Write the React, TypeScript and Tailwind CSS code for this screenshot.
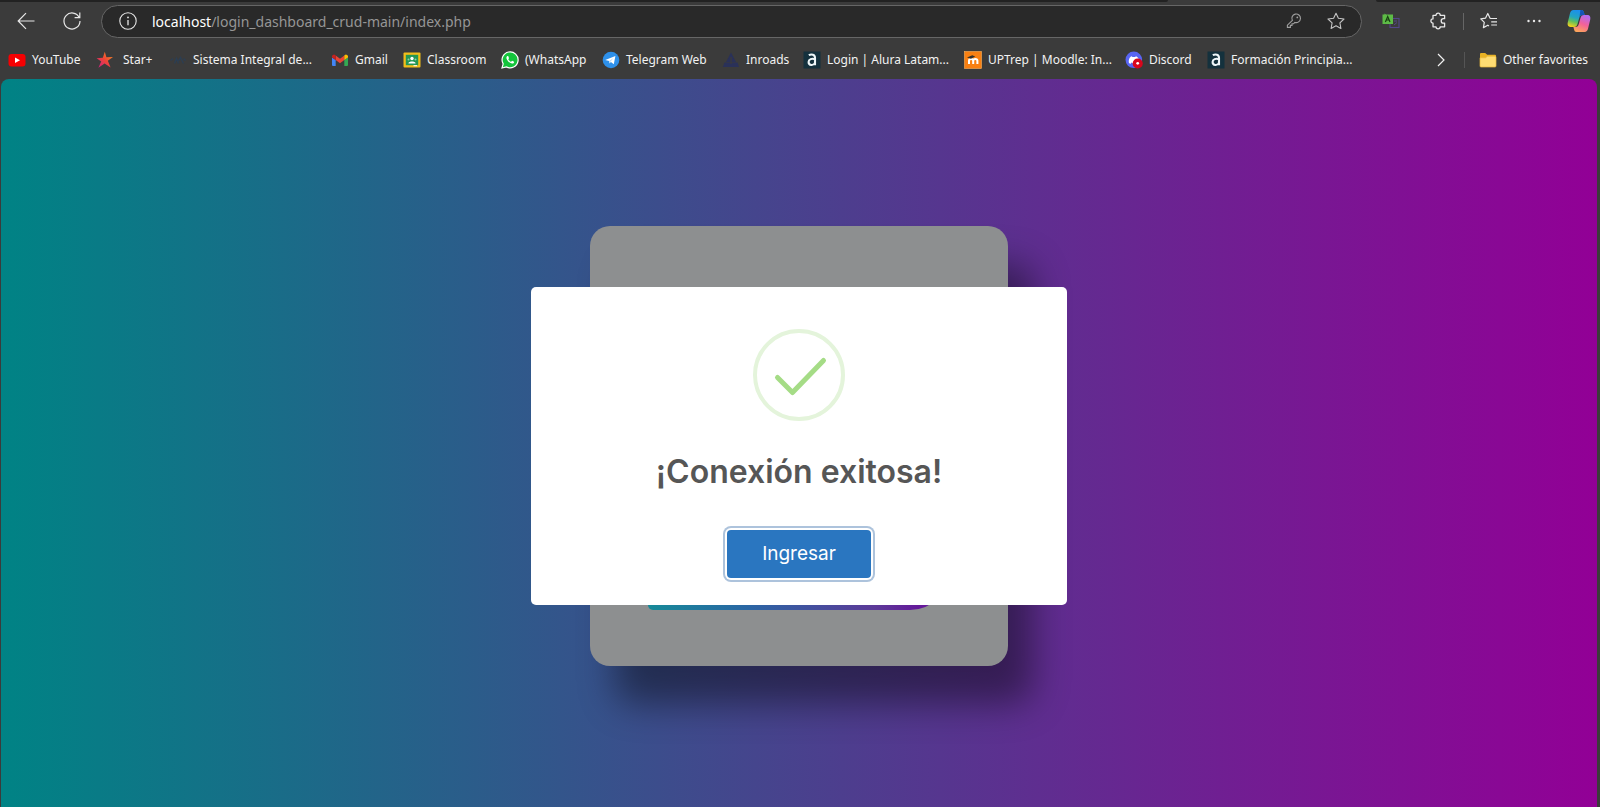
import React from "react";

function YouTubeIcon() {
  return (
    <svg viewBox="0 0 18 18" className="size-[18px] shrink-0">
      <rect x="0.5" y="3" width="17" height="12.5" rx="3" fill="#f60002" />
      <path d="M7 6.4 12 9.2 7 12Z" fill="#fff" />
    </svg>
  );
}

function StarPlusIcon() {
  return (
    <svg viewBox="0 0 18 18" className="mr-[3px] size-[18px] shrink-0">
      <defs>
        <linearGradient id="starplus" x1="0" y1="1" x2="1" y2="0">
          <stop offset="0" stopColor="#c81b8c" />
          <stop offset="0.5" stopColor="#ee4438" />
          <stop offset="1" stopColor="#fb9a1c" />
        </linearGradient>
      </defs>
      <path d="M8.8 0.8 10.4 6.2 17 6 11.8 9.8 14.6 16.6 8.6 12.4 2.4 16.8 5.2 10.6 0.6 7.2 6.8 6.8Z" fill="url(#starplus)" />
    </svg>
  );
}

function SistemaIcon() {
  return (
    <svg viewBox="0 0 18 18" className="size-[18px] shrink-0" fill="none" stroke="#2c3e52" strokeWidth="1.4">
      <path d="M1.5 9.5 4 7.5M5.5 12.5 7.5 7.5 9.5 12.5M9.5 10 11.5 6.5 14.5 12.5M14.5 7.5 16.5 9.5" />
    </svg>
  );
}

function GmailIcon() {
  return (
    <svg viewBox="0 0 18 18" className="size-[18px] shrink-0">
      <path d="M1 6.5 4.7 9V15H2A1 1 0 0 1 1 14Z" fill="#4285f4" />
      <path d="M17 6.5 13.3 9V15H16A1 1 0 0 0 17 14Z" fill="#34a853" />
      <path d="M4.7 4.6 9 7.8 13.3 4.6V9L9 12.2 4.7 9Z" fill="#ea4335" />
      <path d="M1 5A2 2 0 0 1 4.4 4.3L4.7 4.6V9L1 6.5Z" fill="#c5221f" />
      <path d="M17 5A2 2 0 0 0 13.6 4.3L13.3 4.6V9L17 6.5Z" fill="#fbbc04" />
    </svg>
  );
}

function ClassroomIcon() {
  return (
    <svg viewBox="0 0 18 18" className="size-[18px] shrink-0">
      <rect x="0.5" y="1.5" width="17" height="15" rx="1" fill="#f0bd1a" />
      <rect x="2.8" y="3.8" width="12.4" height="10.4" fill="#229654" />
      <circle cx="9" cy="7.5" r="1.7" fill="#fff" />
      <path d="M5.5 12C6 10 12 10 12.5 12V12.5H5.5Z" fill="#fff" />
      <circle cx="5.5" cy="8.5" r="1" fill="#8fd1a6" />
      <circle cx="12.5" cy="8.5" r="1" fill="#8fd1a6" />
      <path d="M10.5 14.2H14V15.2H10.5Z" fill="#fff" />
    </svg>
  );
}

function WhatsAppIcon() {
  return (
    <svg viewBox="0 0 18 18" className="size-[18px] shrink-0">
      <path d="M1 17 2.2 12.9A8 8 0 1 1 5.3 15.9Z" fill="#14c43c" stroke="#fff" strokeWidth="1.2" />
      <path d="M6.4 5C5.2 5.6 5 7.2 6.2 9C7.6 11.2 9.6 12.7 11.5 12.6C12.7 12.5 13.3 11.6 13.1 10.7L11.1 9.7 10.1 10.8C8.8 10.3 7.9 9.4 7.3 8.2L8 7.2 7.2 5.1Z" fill="#fff" />
    </svg>
  );
}

function TelegramIcon() {
  return (
    <svg viewBox="0 0 18 18" className="size-[18px] shrink-0">
      <circle cx="9" cy="9" r="8.3" fill="#2e90ea" />
      <path d="M3.2 9 13.4 4.9 11.8 13.2 8.9 11.1 7.5 12.5 7.2 10.1Z" fill="#fff" />
      <path d="M7.2 10.1 11.5 6.9 8.4 10.8Z" fill="#b5d8f6" />
    </svg>
  );
}

function InroadsIcon() {
  return (
    <svg viewBox="0 0 18 18" className="size-[18px] shrink-0">
      <path d="M9 1.5 14 11H4Z" fill="#2a3158" />
      <path d="M2.5 11.5H15.5L17 16H0.8Z" fill="#2a3158" />
      <path d="M9 6V13" stroke="#3b3b3b" strokeWidth="1.2" />
    </svg>
  );
}

function AluraIcon() {
  return (
    <svg viewBox="0 0 18 18" className="size-[18px] shrink-0">
      <rect x="0.5" y="0.5" width="17" height="17" fill="#14313d" />
      <path d="M5.8 4.2C8.5 2.7 12 3.5 12 6.8V14.2M12 8.2C9 7.2 5.6 8 5.6 11.1C5.6 14.8 10.5 15 12 11.9" fill="none" stroke="#eef6f8" strokeWidth="2.1" />
    </svg>
  );
}

function MoodleIcon() {
  return (
    <svg viewBox="0 0 18 18" className="size-[18px] shrink-0">
      <rect x="0.5" y="0.5" width="17" height="17" fill="#f98012" stroke="#ffb15a" strokeWidth="0.6" />
      <path d="M5 13V9.7C5 7.4 9.2 7.4 9.2 9.7V13M9.2 9.7C9.2 7.4 13.4 7.4 13.4 9.7V13" fill="none" stroke="#fff" strokeWidth="2" />
      <path d="M3 6.6 8.3 4.3 11.2 5.4 7 7.8Z" fill="#33302c" />
    </svg>
  );
}

function DiscordIcon() {
  return (
    <svg viewBox="0 0 18 18" className="size-[18px] shrink-0">
      <circle cx="8.8" cy="8.8" r="8.3" fill="#5865f2" />
      <path d="M4 12C3.3 9 4.6 5.8 6.6 5.2L7.5 6H10.1L11 5.2C12.8 5.8 14 8 14 9.5L8 12.5 6.2 11.6 5.5 13Z" fill="#fff" />
      <circle cx="12.7" cy="12.5" r="5.1" fill="#d9061c" />
      <circle cx="12.7" cy="12.3" r="1.4" fill="#fff" />
    </svg>
  );
}

function FolderIcon() {
  return (
    <svg viewBox="0 0 18 18" className="size-[18px] shrink-0">
      <path d="M1 3A1 1 0 0 1 2 2H6.2L8.2 3.8H16A1 1 0 0 1 17 4.8V8H1Z" fill="#e9b224" />
      <path d="M1 6.8H6.6L8.4 5.2H16A1 1 0 0 1 17 6.2V15A1 1 0 0 1 16 16H2A1 1 0 0 1 1 15Z" fill="#fedc73" stroke="#eab93a" strokeWidth="0.7" />
    </svg>
  );
}

type Bookmark = { label: string; icon: React.ReactNode; space: string };

const bookmarks: Bookmark[] = [
  { label: "YouTube", icon: <YouTubeIcon />, space: "w-[88px]" },
  { label: "Star+", icon: <StarPlusIcon />, space: "w-[73px]" },
  { label: "Sistema Integral de...", icon: <SistemaIcon />, space: "w-[162px]" },
  { label: "Gmail", icon: <GmailIcon />, space: "w-[72px]" },
  { label: "Classroom", icon: <ClassroomIcon />, space: "w-[98px]" },
  { label: "(WhatsApp", icon: <WhatsAppIcon />, space: "w-[101px]" },
  { label: "Telegram Web", icon: <TelegramIcon />, space: "w-[120px]" },
  { label: "Inroads", icon: <InroadsIcon />, space: "w-[81px]" },
  { label: "Login | Alura Latam...", icon: <AluraIcon />, space: "w-[161px]" },
  { label: "UPTrep | Moodle: In...", icon: <MoodleIcon />, space: "w-[161px]" },
  { label: "Discord", icon: <DiscordIcon />, space: "w-[82px]" },
  { label: "Formación Principia...", icon: <AluraIcon />, space: "w-[161px]" },
];

function CopilotIcon() {
  return (
    <svg viewBox="0 0 24 24" className="size-6">
      <defs>
        <linearGradient id="copA" x1="0.6" y1="0" x2="0.3" y2="1">
          <stop offset="0" stopColor="#1b8df0" />
          <stop offset="0.45" stopColor="#22a5c0" />
          <stop offset="0.7" stopColor="#62bf5c" />
          <stop offset="1" stopColor="#f2d21c" />
        </linearGradient>
        <linearGradient id="copB" x1="0.7" y1="0" x2="0.3" y2="1">
          <stop offset="0" stopColor="#b06cf5" />
          <stop offset="0.5" stopColor="#f2619a" />
          <stop offset="1" stopColor="#fda65a" />
        </linearGradient>
      </defs>
      <path d="M6.5 1H14.5C16.3 1 16.6 2.3 17.2 4.6L17.6 6H15.5C13.5 6 12.8 7 12.2 9L10.5 15C9.9 17 9 18 7 18H3.5C1 18 0.2 15.8 0.8 13.3L3 4.2C3.5 2.3 4.4 1 6.5 1Z" fill="url(#copA)" />
      <path d="M17.5 23H9.5C7.7 23 7.4 21.7 6.8 19.4L6.4 18H8.5C10.5 18 11.2 17 11.8 15L13.5 9C14.1 7 15 6 17 6H20.5C23 6 23.8 8.2 23.2 10.7L21 19.8C20.5 21.7 19.6 23 17.5 23Z" fill="url(#copB)" />
      <path d="M14.5 1C16.3 1 16.6 2.3 17.2 4.6L17.6 6H15.5C13.8 6 13 6.8 12.5 8L13.4 1Z" fill="#1554b8" />
    </svg>
  );
}

function Toolbar() {
  return (
    <div className="flex h-[38px] items-center text-[#e8e8e8]">
      <button aria-label="Back" className="flex w-[51px] justify-center">
        <svg viewBox="0 0 18 18" className="size-[18px]" fill="none" stroke="currentColor" strokeWidth="1.2">
          <path d="M17.5 9H1.2M9 1.2 1.2 9 9 16.8" />
        </svg>
      </button>
      <button aria-label="Refresh" className="flex w-[42px] justify-center">
        <svg viewBox="0 0 20 20" className="size-5" fill="none" stroke="currentColor" strokeWidth="1.2">
          <path d="M17.2 6.5A8 8 0 1 0 18 10M17.8 1.5V6.7H12.6" />
        </svg>
      </button>
      <div className="ml-2 flex h-[33px] grow items-center rounded-full border border-[#666] bg-[#292929] pr-4 pl-[17px]">
        <button aria-label="Site information">
          <svg viewBox="0 0 18 18" className="size-[18px]" fill="none" stroke="currentColor" strokeWidth="1.1">
            <circle cx="9" cy="9" r="8.2" />
            <path d="M9 8V13.2" strokeWidth="1.3" />
            <circle cx="9" cy="5.4" r="0.9" fill="currentColor" stroke="none" />
          </svg>
        </button>
        <div className="ml-[15px] grow font-['Noto_Sans','Open_Sans',sans-serif] text-[14px] text-[#969696]">
          <span className="text-white">localhost</span>/login_dashboard_crud-main/index.php
        </div>
        <button aria-label="Saved passwords" className="mr-[25px] text-[#a0a0a0]">
          <svg viewBox="0 0 16 16" className="size-4" fill="none" stroke="currentColor" strokeWidth="1.1">
            <path d="M6.4 7.4A4.3 4.3 0 1 1 8.8 9.4L7.6 10.8H6V12.4H4.4V14.4H1.4V12.2Z" />
            <circle cx="11.3" cy="4.4" r="0.9" fill="currentColor" stroke="none" />
          </svg>
        </button>
        <button aria-label="Add to favorites" className="text-[#c4c4c4]">
          <svg viewBox="0 0 18 18" className="size-[18px]" fill="none" stroke="currentColor" strokeWidth="1.1" strokeLinejoin="round">
            <path d="M9 1.2 11.4 6.3 17 7 12.9 10.9 13.9 16.5 9 13.8 4.1 16.5 5.1 10.9 1 7 6.6 6.3Z" />
          </svg>
        </button>
      </div>
      <div className="flex items-center pl-5">
        <button aria-label="Translate" className="mr-[29px]">
          <svg viewBox="0 0 18 16" className="h-4 w-[18px]">
            <rect x="8" y="5.5" width="9" height="9" fill="none" stroke="#54468a" strokeWidth="1.1" />
            <path d="M12 8H15M12 12L15 9.5" stroke="#54468a" strokeWidth="1" />
            <path d="M0.5 1.5H2.5V0.5L4 1.5H11V11H0.5Z" fill="#5dbb46" />
            <path d="M3.4 9 5.7 3.5 8 9M4.3 7H7.1" fill="none" stroke="#173d12" strokeWidth="1.2" />
          </svg>
        </button>
        <button aria-label="Extensions">
          <svg viewBox="0 0 18 18" className="size-[18px]" fill="none" stroke="currentColor" strokeWidth="1.3" strokeLinejoin="round">
            <path d="M4 3.3H7A2.1 2.1 0 0 1 11.2 3.3H15.6V6.7H14.4A2.2 2.2 0 0 0 14.4 11.1H15.6V14.8H11.2A2.1 2.1 0 0 1 7 14.8H4V11.1A2.1 2.1 0 0 1 4 6.9Z" />
          </svg>
        </button>
        <span className="mx-4 h-[17px] w-px bg-[#666]" />
        <button aria-label="Favorites" className="mr-[29px]">
          <svg viewBox="0 0 18 18" className="size-[18px]" fill="none" stroke="currentColor" strokeWidth="1.2" strokeLinejoin="round">
            <path d="M10.2 6.4 7.8 1.5 5.6 6.1 0.8 6.8 4.3 10.3 3.4 15.6 7.8 13.2 9 13.9M10.2 6.5H17M11.2 9.8H17M11.2 13H17" />
          </svg>
        </button>
        <button aria-label="Settings and more" className="mr-[26px]">
          <svg viewBox="0 0 14 4" className="h-1 w-[14px]" fill="currentColor">
            <circle cx="1.5" cy="2" r="1.2" />
            <circle cx="7" cy="2" r="1.2" />
            <circle cx="12.5" cy="2" r="1.2" />
          </svg>
        </button>
        <button aria-label="Copilot" className="mr-[9px]">
          <CopilotIcon />
        </button>
      </div>
    </div>
  );
}

function BookmarksBar() {
  return (
    <nav className="flex h-[39px] items-center pl-2 font-['Noto_Sans','Open_Sans',sans-serif] text-[12px] whitespace-nowrap text-[#f2f2f2]">
      {bookmarks.map((b) => (
        <a key={b.label} href="#" className={`flex shrink-0 items-center gap-[6px] ${b.space}`}>
          {b.icon}
          {b.label}
        </a>
      ))}
      <button aria-label="More favorites" className="ml-auto">
        <svg viewBox="0 0 8 14" className="h-[14px] w-2" fill="none" stroke="currentColor" strokeWidth="1.2">
          <path d="M1 1 7 7 1 13" />
        </svg>
      </button>
      <span className="mr-[14px] ml-[19px] h-4 w-px bg-[#555]" />
      <a href="#" className="mr-3 flex shrink-0 items-center gap-[6px]">
        <FolderIcon />
        Other favorites
      </a>
    </nav>
  );
}

function TabStrip() {
  return (
    <div className="flex h-[2px] justify-between">
      <div className="w-[73%] rounded-br-sm bg-[#222]" />
      <div className="w-[14%] rounded-bl-sm bg-[#222]" />
    </div>
  );
}

export default function App() {
  return (
    <div className="flex min-h-screen flex-col bg-[#3b3b3b]">
      <header>
        <TabStrip />
        <Toolbar />
        <BookmarksBar />
      </header>
      <main className="mr-[3px] ml-px grid grow place-items-center overflow-hidden rounded-t-lg bg-[linear-gradient(to_right,#008385,#920096)] pt-[6px]">
        <div className="col-start-1 row-start-1 flex h-[440px] w-[418px] items-end rounded-[20px] bg-[#8d8f90] px-[58px] pb-[56px] shadow-[25px_38px_36px_rgba(0,0,0,0.42)]">
          <div className="h-[50px] w-full rounded-[5px] rounded-br-[40px] bg-[linear-gradient(to_right,#168a98,#2a66a4_33%,#5c3a98_75%,#65189a_90%)]" />
        </div>
        <div role="dialog" aria-labelledby="dialog-title" className="z-10 col-start-1 row-start-1 flex h-[318px] w-[536px] flex-col items-center rounded-[5px] bg-white pt-[42px] font-['Inter',sans-serif]">
          <svg viewBox="0 0 92 92" className="size-[92px]" fill="none">
            <circle cx="46" cy="46" r="44" stroke="#e4f4db" strokeWidth="4" />
            <path d="M24.5 48.5 39.5 63.5 70.5 31.5" stroke="#a5dc86" strokeWidth="5" strokeLinecap="round" strokeLinejoin="round" />
          </svg>
          <h2 id="dialog-title" className="mt-[27px] text-[32px] leading-[48px] font-semibold text-[#565656]">¡Conexión exitosa!</h2>
          <button className="mt-[34px] h-12 w-36 rounded-[4px] bg-[#2a76c0] text-[19px] text-white shadow-[0_0_0_2px_#fff,0_0_0_4px_#adc3dc]">Ingresar</button>
        </div>
      </main>
    </div>
  );
}
